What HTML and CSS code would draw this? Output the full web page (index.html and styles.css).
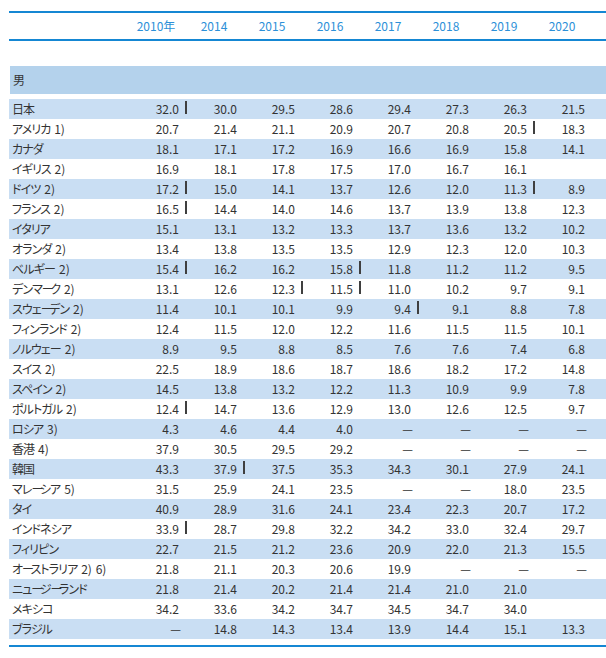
FILE: index.html
```html
<!DOCTYPE html>
<html lang="ja">
<head>
<meta charset="utf-8">
<link rel="stylesheet" href="styles.css">
</head>
<body>
<div class="sheet">
  <div class="head">
    <table class="head-table">
      <colgroup><col class="h-label"><col class="c-num"><col class="c-num"><col class="c-num"><col class="c-num"><col class="c-num"><col class="c-num"><col class="c-num"><col class="c-num"></colgroup>
      <tr><th></th><th>2010年</th><th>2014</th><th>2015</th><th>2016</th><th>2017</th><th>2018</th><th>2019</th><th>2020</th></tr>
    </table>
  </div>
  <div class="band">男</div>
  <table class="data">
    <colgroup><col class="c-label"><col class="c-num"><col class="c-num"><col class="c-num"><col class="c-num"><col class="c-num"><col class="c-num"><col class="c-num"><col class="c-num"></colgroup>
    <tbody>
      <tr><th>日本</th><td><span class="m">32.0</span></td><td>30.0</td><td>29.5</td><td>28.6</td><td>29.4</td><td>27.3</td><td>26.3</td><td>21.5</td></tr>
      <tr><th>アメリカ <span class="fn">1)</span></th><td>20.7</td><td>21.4</td><td>21.1</td><td>20.9</td><td>20.7</td><td>20.8</td><td><span class="m">20.5</span></td><td>18.3</td></tr>
      <tr><th>カナダ</th><td>18.1</td><td>17.1</td><td>17.2</td><td>16.9</td><td>16.6</td><td>16.9</td><td>15.8</td><td>14.1</td></tr>
      <tr><th>イギリス <span class="fn">2)</span></th><td>16.9</td><td>18.1</td><td>17.8</td><td>17.5</td><td>17.0</td><td>16.7</td><td>16.1</td><td></td></tr>
      <tr><th>ドイツ <span class="fn">2)</span></th><td><span class="m">17.2</span></td><td>15.0</td><td>14.1</td><td>13.7</td><td>12.6</td><td>12.0</td><td><span class="m">11.3</span></td><td>8.9</td></tr>
      <tr><th>フランス <span class="fn">2)</span></th><td><span class="m">16.5</span></td><td>14.4</td><td>14.0</td><td>14.6</td><td>13.7</td><td>13.9</td><td>13.8</td><td>12.3</td></tr>
      <tr><th>イタリア</th><td>15.1</td><td>13.1</td><td>13.2</td><td>13.3</td><td>13.7</td><td>13.6</td><td>13.2</td><td>10.2</td></tr>
      <tr><th>オランダ <span class="fn">2)</span></th><td>13.4</td><td>13.8</td><td>13.5</td><td>13.5</td><td>12.9</td><td>12.3</td><td>12.0</td><td>10.3</td></tr>
      <tr><th>ベルギ<span class="ch">ー</span> <span class="fn fn-ch">2)</span></th><td><span class="m">15.4</span></td><td>16.2</td><td>16.2</td><td><span class="m">15.8</span></td><td>11.8</td><td>11.2</td><td>11.2</td><td>9.5</td></tr>
      <tr><th>デンマ<span class="ch">ー</span>ク <span class="fn">2)</span></th><td>13.1</td><td>12.6</td><td><span class="m">12.3</span></td><td><span class="m">11.5</span></td><td>11.0</td><td>10.2</td><td>9.7</td><td>9.1</td></tr>
      <tr><th>スウェ<span class="ch">ー</span>デン <span class="fn">2)</span></th><td>11.4</td><td>10.1</td><td>10.1</td><td>9.9</td><td><span class="m">9.4</span></td><td>9.1</td><td>8.8</td><td>7.8</td></tr>
      <tr><th>フィンランド <span class="fn">2)</span></th><td>12.4</td><td>11.5</td><td>12.0</td><td>12.2</td><td>11.6</td><td>11.5</td><td>11.5</td><td>10.1</td></tr>
      <tr><th>ノルウェ<span class="ch">ー</span> <span class="fn fn-ch">2)</span></th><td>8.9</td><td>9.5</td><td>8.8</td><td>8.5</td><td>7.6</td><td>7.6</td><td>7.4</td><td>6.8</td></tr>
      <tr><th>スイス <span class="fn">2)</span></th><td>22.5</td><td>18.9</td><td>18.6</td><td>18.7</td><td>18.6</td><td>18.2</td><td>17.2</td><td>14.8</td></tr>
      <tr><th>スペイン <span class="fn">2)</span></th><td>14.5</td><td>13.8</td><td>13.2</td><td>12.2</td><td>11.3</td><td>10.9</td><td>9.9</td><td>7.8</td></tr>
      <tr><th>ポルトガル <span class="fn">2)</span></th><td><span class="m">12.4</span></td><td>14.7</td><td>13.6</td><td>12.9</td><td>13.0</td><td>12.6</td><td>12.5</td><td>9.7</td></tr>
      <tr><th>ロシア <span class="fn">3)</span></th><td>4.3</td><td>4.6</td><td>4.4</td><td>4.0</td><td class="d">—</td><td class="d">—</td><td class="d">—</td><td class="d">—</td></tr>
      <tr><th>香港 <span class="fn">4)</span></th><td>37.9</td><td>30.5</td><td>29.5</td><td>29.2</td><td class="d">—</td><td class="d">—</td><td class="d">—</td><td class="d">—</td></tr>
      <tr><th>韓国</th><td>43.3</td><td><span class="m">37.9</span></td><td>37.5</td><td>35.3</td><td>34.3</td><td>30.1</td><td>27.9</td><td>24.1</td></tr>
      <tr><th>マレ<span class="ch">ー</span>シア <span class="fn">5)</span></th><td>31.5</td><td>25.9</td><td>24.1</td><td>23.5</td><td class="d">—</td><td class="d">—</td><td>18.0</td><td>23.5</td></tr>
      <tr><th>タイ</th><td>40.9</td><td>28.9</td><td>31.6</td><td>24.1</td><td>23.4</td><td>22.3</td><td>20.7</td><td>17.2</td></tr>
      <tr><th>インドネシア</th><td><span class="m">33.9</span></td><td>28.7</td><td>29.8</td><td>32.2</td><td>34.2</td><td>33.0</td><td>32.4</td><td>29.7</td></tr>
      <tr><th>フィリピン</th><td>22.7</td><td>21.5</td><td>21.2</td><td>23.6</td><td>20.9</td><td>22.0</td><td>21.3</td><td>15.5</td></tr>
      <tr><th>オ<span class="ch">ー</span>ストラリア <span class="fn">2)</span> <span class="fn">6)</span></th><td>21.8</td><td>21.1</td><td>20.3</td><td>20.6</td><td>19.9</td><td class="d">—</td><td class="d">—</td><td class="d">—</td></tr>
      <tr><th>ニュ<span class="ch">ー</span>ジ<span class="ch">ー</span>ランド</th><td>21.8</td><td>21.4</td><td>20.2</td><td>21.4</td><td>21.4</td><td>21.0</td><td>21.0</td><td></td></tr>
      <tr><th>メキシコ</th><td>34.2</td><td>33.6</td><td>34.2</td><td>34.7</td><td>34.5</td><td>34.7</td><td>34.0</td><td></td></tr>
      <tr><th>ブラジル</th><td class="d">—</td><td>14.8</td><td>14.3</td><td>13.4</td><td>13.9</td><td>14.4</td><td>15.1</td><td>13.3</td></tr>
    </tbody>
  </table>
  <div class="foot"></div>
</div>
</body>
</html>
```

FILE: styles.css
```css
html, body {
  margin: 0;
  padding: 0;
  background: #ffffff;
}

body {
  font-family: "Noto Sans CJK JP", "Noto Sans", sans-serif;
  font-feature-settings: "palt";
  font-size: 12px;
  color: #333333;
}

.sheet {
  margin-left: 9px;
  width: 597px;
  padding-top: 11px;
}

table {
  border-collapse: collapse;
  table-layout: fixed;
}

.c-label { width: 133px; }
.h-label { width: 118px; }
.c-num { width: 58px; }

.head {
  border-top: 2px solid #1587d3;
  border-bottom: 2px solid #1587d3;
}

.head-table {
  width: 582px;
}

.head-table th {
  height: 26px;
  padding: 0;
  text-align: center;
  font-weight: normal;
  color: #2c90d8;
  line-height: 26px;
  white-space: nowrap;
}

.band {
  margin-top: 25px;
  height: 28px;
  line-height: 28px;
  background: #b4d2ec;
  padding-left: 3px;
  margin-left: 1px;
  margin-bottom: 5px;
}

.data {
  width: 597px;
}

.data tr {
  height: 20px;
}

.data tr:nth-child(odd) {
  background: #c9def3;
}

.data th {
  height: 20px;
  text-align: left;
  font-weight: normal;
  padding: 0 0 0 3px;
  line-height: 20px;
  white-space: nowrap;
  letter-spacing: -0.9px;
}

.ch {
  letter-spacing: -3.5px;
}

.fn {
  letter-spacing: 0;
  margin-left: 2px;
}

.fn-ch {
  margin-left: 5px;
}

.data td {
  height: 20px;
  text-align: right;
  padding: 0 21px 0 0;
  line-height: 20px;
  white-space: nowrap;
}

.data td.d {
  padding-right: 19px;
}

.m {
  position: relative;
}

.m::after {
  content: "";
  position: absolute;
  left: calc(100% + 6px);
  top: 1px;
  width: 2px;
  height: 13px;
  background: #3f3f3f;
}

.foot {
  margin-top: 6px;
  border-top: 2px solid #1587d3;
}
```
